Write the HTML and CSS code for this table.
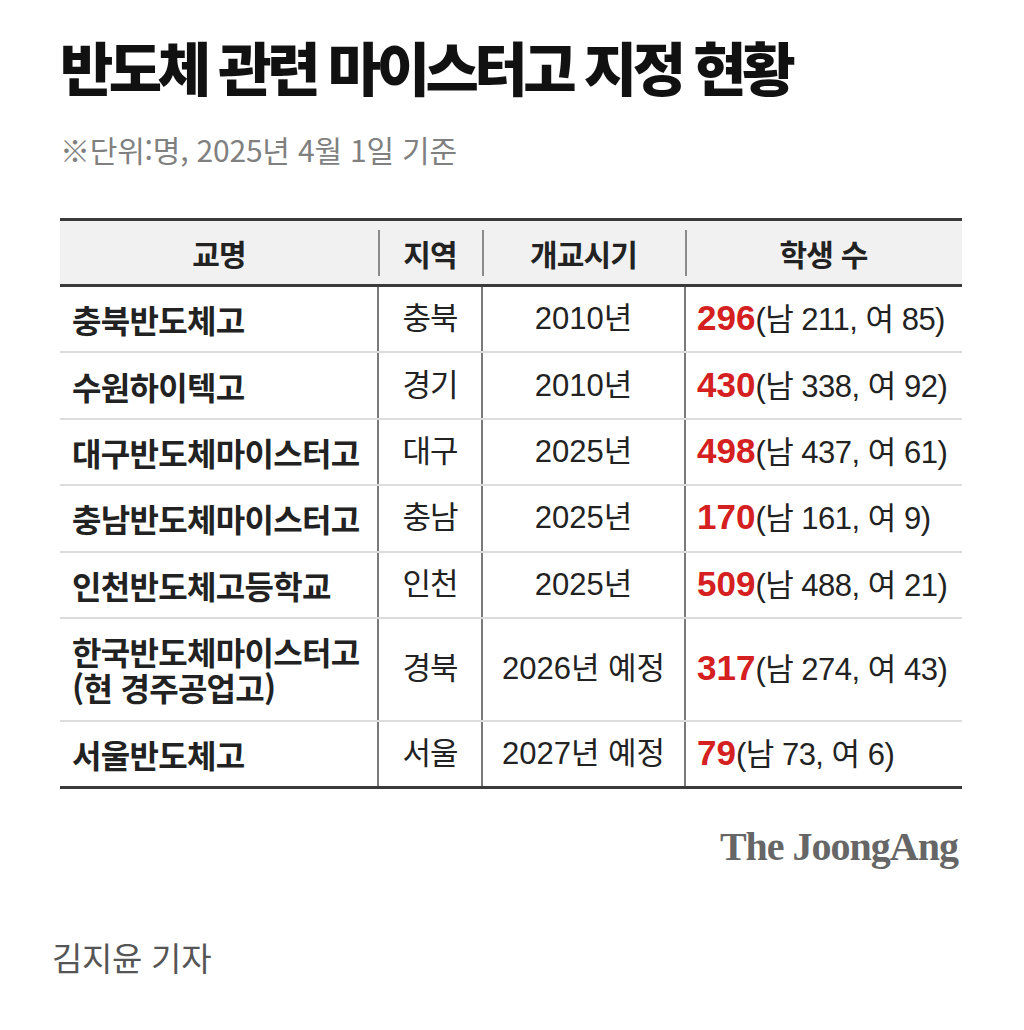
FILE: index.html
```html
<!DOCTYPE html>
<html lang="ko">
<head>
<meta charset="utf-8">
<title>반도체 관련 마이스터고 지정 현황</title>
<link rel="stylesheet" href="styles.css">
</head>
<body>
<main class="page">
  <h1 class="title">반도체 관련 마이스터고 지정 현황</h1>
  <p class="note">※단위:명, 2025년 4월 1일 기준</p>
  <table class="grid">
    <colgroup>
      <col class="c-name"><col class="c-region"><col class="c-year"><col class="c-count">
    </colgroup>
    <thead>
      <tr><th>교명</th><th>지역</th><th>개교시기</th><th>학생 수</th></tr>
    </thead>
    <tbody>
      <tr><td class="name">충북반도체고</td><td class="mid">충북</td><td class="mid num">2010년</td><td class="count"><b>296</b>(남 211, 여 85)</td></tr>
      <tr><td class="name">수원하이텍고</td><td class="mid">경기</td><td class="mid num">2010년</td><td class="count"><b>430</b>(남 338, 여 92)</td></tr>
      <tr><td class="name">대구반도체마이스터고</td><td class="mid">대구</td><td class="mid num">2025년</td><td class="count"><b>498</b>(남 437, 여 61)</td></tr>
      <tr><td class="name">충남반도체마이스터고</td><td class="mid">충남</td><td class="mid num">2025년</td><td class="count"><b>170</b>(남 161, 여 9)</td></tr>
      <tr><td class="name">인천반도체고등학교</td><td class="mid">인천</td><td class="mid num">2025년</td><td class="count"><b>509</b>(남 488, 여 21)</td></tr>
      <tr class="tall"><td class="name"><span class="line">한국반도체마이스터고</span><span class="line">(현 경주공업고)</span></td><td class="mid">경북</td><td class="mid num">2026년 예정</td><td class="count"><b>317</b>(남 274, 여 43)</td></tr>
      <tr><td class="name">서울반도체고</td><td class="mid">서울</td><td class="mid num">2027년 예정</td><td class="count"><b>79</b>(남 73, 여 6)</td></tr>
    </tbody>
  </table>
  <div class="brand">The JoongAng</div>
  <p class="byline">김지윤 기자</p>
</main>
</body>
</html>
```

FILE: styles.css
```css
html, body {
  margin: 0;
  background: #ffffff;
}
body {
  font-family: "Noto Sans CJK KR", "Noto Sans", sans-serif;
  color: #222222;
}
.page {
  width: 1024px;
  padding-top: 28px;
}
.title {
  margin: 0 0 0 60px;
  font-size: 58px;
  line-height: 76px;
  font-weight: 900;
  letter-spacing: -4.5px;
  color: #111111;
}
.note {
  margin: 27px 0 0 60px;
  font-size: 30px;
  line-height: 36px;
  letter-spacing: -0.2px;
  color: #808080;
}
.grid {
  margin: 51px 0 0 60px;
  width: 902px;
  border-collapse: collapse;
  table-layout: fixed;
  font-family: "Liberation Sans", "Noto Sans CJK KR", sans-serif;
  font-size: 31px;
  line-height: 36px;
  color: #222222;
}
.c-name { width: 318px; }
.c-region { width: 104px; }
.c-year { width: 203px; }
.c-count { width: 277px; }
.grid thead tr {
  border-top: 3px solid #3a3a3a;
  border-bottom: 3px solid #3a3a3a;
}
.grid th {
  height: 63px;
  padding: 0;
  background-color: #f1f1f1;
  font-family: "Noto Sans CJK KR", sans-serif;
  font-weight: 700;
  font-size: 30px;
  letter-spacing: -0.8px;
  text-align: center;
}
.grid th + th {
  background-image: linear-gradient(#8a8a8a, #8a8a8a);
  background-size: 2px 46px;
  background-position: left center;
  background-repeat: no-repeat;
}
.grid td {
  height: 64.4px;
  padding: 0;
  border-bottom: 2px solid #dcdcdc;
  vertical-align: middle;
}
.grid td + td {
  border-left: 2px solid #7a7a7a;
}
.grid tr.tall td {
  height: 101px;
}
.grid tbody tr:last-child td {
  border-bottom: 3px solid #3a3a3a;
}
.name {
  padding-left: 12px !important;
  font-family: "Noto Sans CJK KR", sans-serif;
  font-weight: 700;
  font-size: 32px;
  letter-spacing: -0.7px;
}
.line {
  display: block;
  line-height: 36px;
}
.mid {
  text-align: center;
  letter-spacing: -1px;
}
.num {
  letter-spacing: 0;
}
.count {
  padding-left: 11px !important;
  letter-spacing: -0.5px;
  white-space: nowrap;
}
.count b {
  color: #d42020;
  font-size: 35px;
  letter-spacing: 0;
}
.brand {
  margin: 33px 66px 0 0;
  text-align: right;
  font-family: "Liberation Serif", "DejaVu Serif", serif;
  font-weight: 700;
  font-size: 40px;
  line-height: 50px;
  letter-spacing: -1px;
  color: #666666;
}
.byline {
  margin: 63px 0 0 52px;
  font-size: 33px;
  line-height: 44px;
  letter-spacing: -0.3px;
  color: #555555;
}
```
